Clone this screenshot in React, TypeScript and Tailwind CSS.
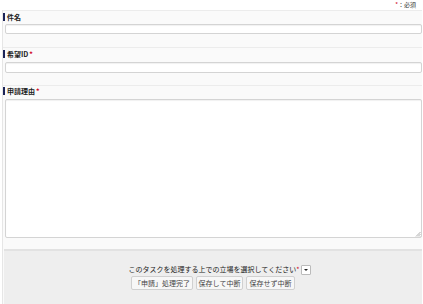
import React from 'react';

const font = { fontFamily: '"Noto Sans CJK JP", "Noto Sans", sans-serif' };

function Label({ text, required }: { text: string; required?: boolean }) {
  return (
    <div className="flex items-center h-[8px] text-[7px] font-bold text-[#222] leading-none">
      <span className="w-[2px] h-[8px] bg-[#1c2458] mr-[2px]" />
      <span>{text}</span>
      {required && <span className="text-[#d0021b] ml-[1px]">*</span>}
    </div>
  );
}

export default function App() {
  return (
    <div className="w-[423px] h-[304px] bg-white overflow-hidden flex flex-col text-[#333]" style={font}>
      {/* required note */}
      <div className="h-[10px] flex items-center justify-end pr-[7px] text-[6px] leading-none">
        <span className="text-[#d0021b]">*</span>
        <span>：必須</span>
      </div>

      <div className="flex-1 flex flex-col ml-[2px] mr-[1px] border-l border-[#e6e6e6] bg-[#fafafa]">
        {/* 件名 */}
        <div className="border-t border-[#ececec] pt-[2px] pb-[13px]">
          <Label text="件名" />
          <div className="mt-[3px] ml-[2px] h-[10px] bg-white border border-[#d4d4d4] rounded-[2px] shadow-[inset_0_1px_1px_rgba(0,0,0,0.06)]" />
        </div>

        {/* 希望ID */}
        <div className="border-t border-[#ececec] pt-[2px] pb-[12px]">
          <Label text="希望ID" required />
          <div className="mt-[4px] ml-[2px] h-[11px] bg-white border border-[#d4d4d4] rounded-[2px] shadow-[inset_0_1px_1px_rgba(0,0,0,0.06)]" />
        </div>

        {/* 申請理由 */}
        <div className="border-t border-[#ececec] pt-[1px] pb-[11px]">
          <Label text="申請理由" required />
          <div className="relative mt-[4px] ml-[2px] h-[139px] bg-white border border-[#d4d4d4] rounded-[2px] shadow-[inset_0_1px_1px_rgba(0,0,0,0.06)]">
            <svg className="absolute right-0 bottom-0" width="6" height="6" viewBox="0 0 6 6">
              <path d="M5.5 1 L1 5.5 M5.5 3 L3 5.5 M5.5 5 L5 5.5" stroke="#999" strokeWidth="0.8" />
            </svg>
          </div>
        </div>

        {/* footer */}
        <div className="flex-1 border-t-2 border-[#e2e2e2] bg-[#eeeeee] ml-[1px] flex flex-col items-center pt-[13px]">
          <div className="flex items-center h-[11px] text-[7px] leading-none text-[#222] pl-[14px]">
            <span>このタスクを処理する上での立場を選択してください</span>
            <span className="text-[#d0021b]">*</span>
            <span className="ml-[2px] w-[10px] h-[10px] bg-white border border-[#bbb] rounded-[1px] flex items-center justify-center">
              <span className="w-0 h-0 border-l-[2px] border-r-[2px] border-t-[2px] border-l-transparent border-r-transparent border-t-[#222]" />
            </span>
          </div>
          <div className="flex gap-[3px] mt-[1px] text-[7px] leading-none text-[#444]">
            <button className="h-[14px] w-[62px] bg-[#f7f7f7] border border-[#d0d0d0] rounded-[2px]">「申請」処理完了</button>
            <button className="h-[14px] w-[47px] bg-[#f7f7f7] border border-[#d0d0d0] rounded-[2px]">保存して中断</button>
            <button className="h-[14px] w-[49px] bg-[#f7f7f7] border border-[#d0d0d0] rounded-[2px]">保存せず中断</button>
          </div>
        </div>
      </div>
    </div>
  );
}
